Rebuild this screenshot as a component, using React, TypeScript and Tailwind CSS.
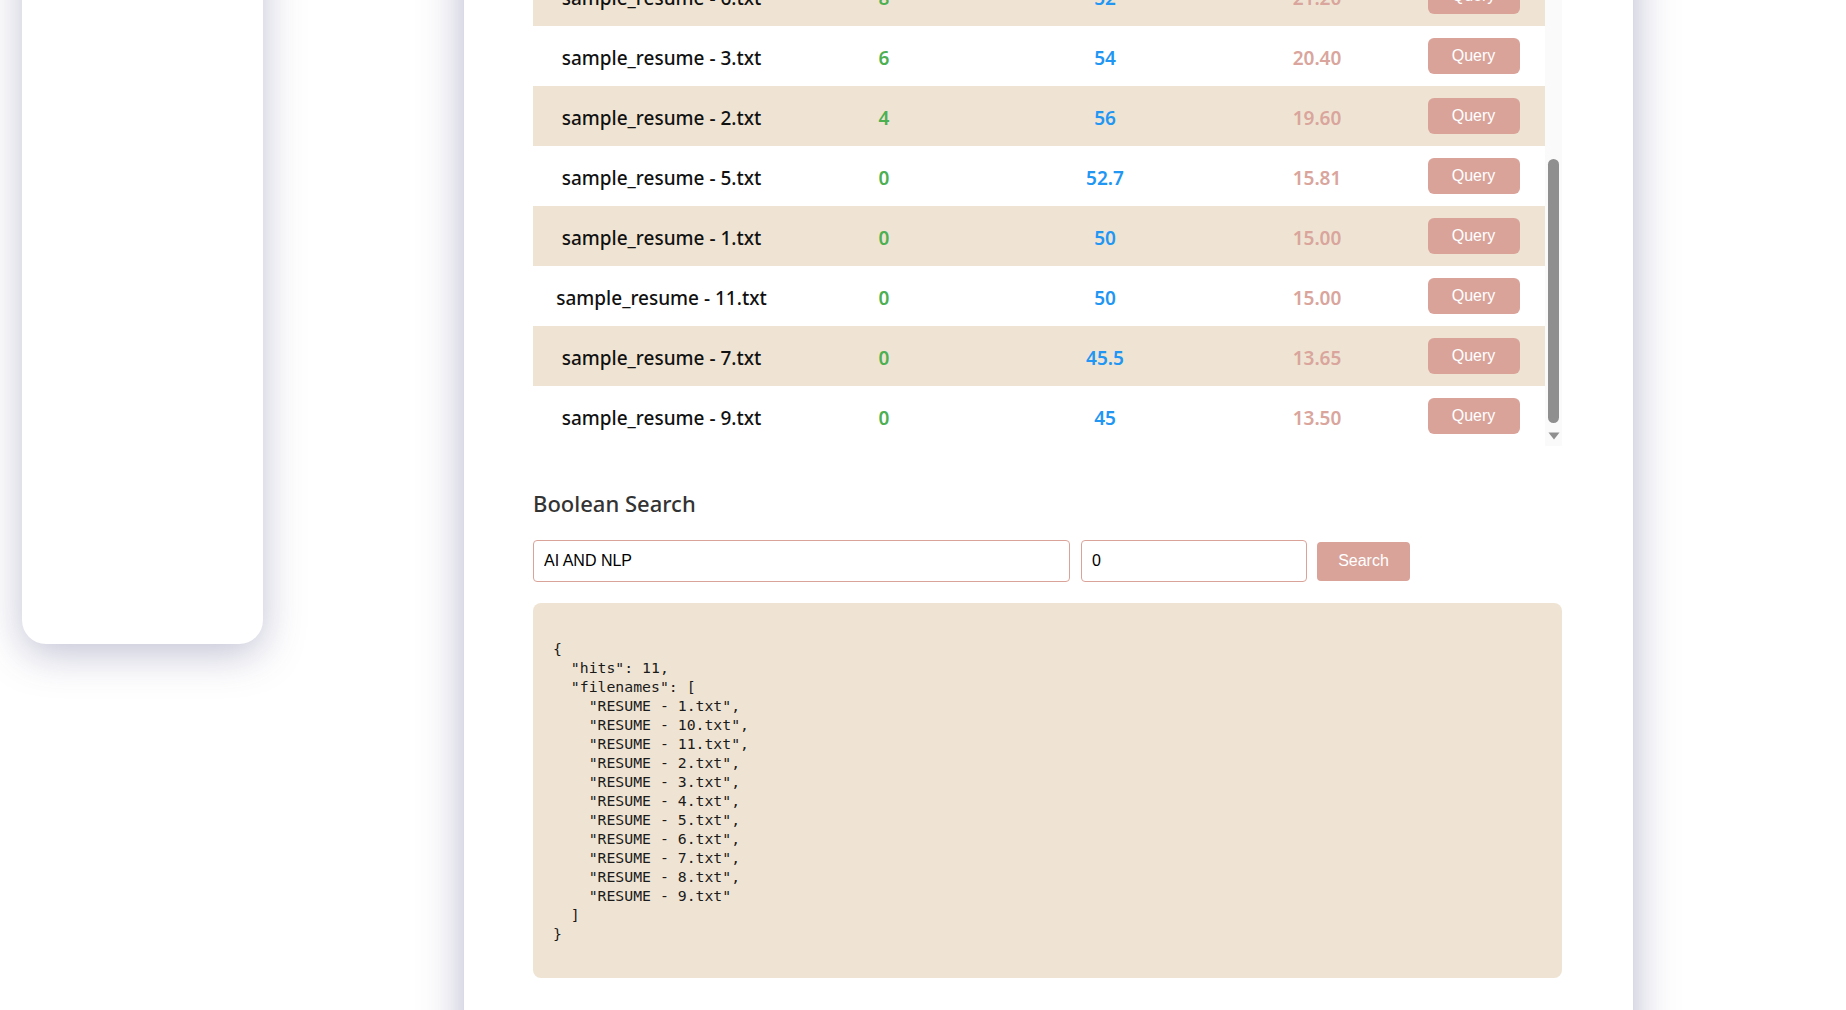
import React from "react";

type Row = { name: string; a: string; b: string; s: string };

const rows: Row[] = [
  { name: "sample_resume - 6.txt", a: "8", b: "52", s: "21.20" },
  { name: "sample_resume - 3.txt", a: "6", b: "54", s: "20.40" },
  { name: "sample_resume - 2.txt", a: "4", b: "56", s: "19.60" },
  { name: "sample_resume - 5.txt", a: "0", b: "52.7", s: "15.81" },
  { name: "sample_resume - 1.txt", a: "0", b: "50", s: "15.00" },
  { name: "sample_resume - 11.txt", a: "0", b: "50", s: "15.00" },
  { name: "sample_resume - 7.txt", a: "0", b: "45.5", s: "13.65" },
  { name: "sample_resume - 9.txt", a: "0", b: "45", s: "13.50" },
];

const json = `{
  "hits": 11,
  "filenames": [
    "RESUME - 1.txt",
    "RESUME - 10.txt",
    "RESUME - 11.txt",
    "RESUME - 2.txt",
    "RESUME - 3.txt",
    "RESUME - 4.txt",
    "RESUME - 5.txt",
    "RESUME - 6.txt",
    "RESUME - 7.txt",
    "RESUME - 8.txt",
    "RESUME - 9.txt"
  ]
}`;

export default function App() {
  return (
    <div className="h-[1010px] w-[1846px] overflow-hidden bg-white flex items-start">
      {/* Sidebar card */}
      <div className="-mt-[100px] ml-[22px] w-[241px] h-[744px] shrink-0 bg-white rounded-b-[24px] shadow-[0_10px_40px_rgba(80,80,136,0.35)]" />

      {/* Main panel */}
      <div className="-mt-[100px] ml-[201px] w-[1169px] h-[1300px] shrink-0 bg-white shadow-[0_0_40px_rgba(80,80,136,0.42)] pt-[66px] px-[69px] font-['Noto_Sans',sans-serif]">
        {/* Scrollable table */}
        <div className="flex h-[480px] overflow-hidden">
          <div className="w-[1012px]">
            {rows.map((r, i) => (
              <div
                key={i}
                className={`grid grid-cols-[257px_188px_254px_170px_143px] h-[60px] items-center text-center ${
                  i % 2 === 0 ? "bg-[#efe4d3]" : "bg-white"
                }`}
              >
                <div className="pt-[4px] text-[19px] font-medium text-[#111]">{r.name}</div>
                <div className="pt-[4px] text-[19px] font-semibold text-[#4caf50]">{r.a}</div>
                <div className="pt-[4px] text-[19px] font-semibold text-[#2196f3]">{r.b}</div>
                <div className="pt-[4px] text-[19px] font-semibold text-[#d9a59c]">{r.s}</div>
                <div className="flex justify-center">
                  <button className="w-[92px] h-[36px] rounded-[6px] bg-[#d9a39a] text-white text-[16px] font-['Liberation_Sans',Arial,sans-serif]">
                    Query
                  </button>
                </div>
              </div>
            ))}
          </div>
          <div className="w-[17px] bg-[#fafafa] flex flex-col items-center">
            <div className="h-[193px] shrink-0" />
            <div className="w-[11px] h-[264px] shrink-0 rounded-full bg-[#8f8f8f]" />
            <div className="h-[9px] shrink-0" />
            <svg width="12" height="8" viewBox="0 0 12 8" className="shrink-0">
              <path d="M0.5 0.5 L11.5 0.5 L6 7.5 Z" fill="#8f8f8f" />
            </svg>
          </div>
        </div>

        {/* Boolean Search */}
        <div className="mt-[42px] h-[30px] leading-[30px] text-[22px] font-medium text-[#333]">
          Boolean Search
        </div>

        <div className="mt-[22px] flex items-center font-['Liberation_Sans',Arial,sans-serif]">
          <input
            readOnly
            value="AI AND NLP"
            className="w-[537px] h-[42px] rounded-[4px] border border-[#d9a39a] px-[10px] text-[16px] text-black outline-none bg-white"
          />
          <input
            readOnly
            value="0"
            className="ml-[11px] w-[226px] h-[42px] rounded-[4px] border border-[#d9a39a] px-[10px] text-[16px] text-black outline-none bg-white"
          />
          <button className="ml-[10px] w-[93px] h-[39px] rounded-[4px] bg-[#d9a39a] text-white text-[16px]">
            Search
          </button>
        </div>

        <div className="mt-[21px] w-[1029px] h-[375px] rounded-[8px] bg-[#efe4d3] p-5">
          <pre className="my-4 font-['DejaVu_Sans_Mono',monospace] text-[14.8px] leading-[19px] text-[#1a1a1a]">
            {json}
          </pre>
        </div>
      </div>
    </div>
  );
}
